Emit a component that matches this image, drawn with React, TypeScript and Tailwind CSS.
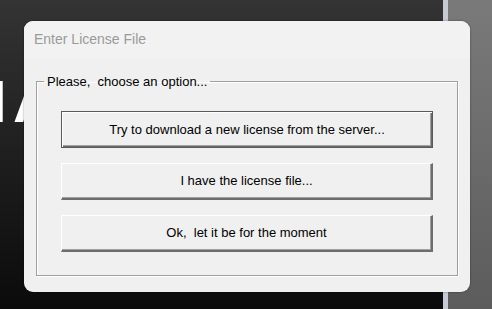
const options = [
  'Try to download a new license from the server...',
  'I have the license file...',
  'Ok,  let it be for the moment',
]

const App = () => {
  return (
    <div className="relative h-[309px] w-[492px] overflow-hidden bg-gradient-to-b from-[#343434] to-[#0b0b0b] font-['Liberation_Sans',sans-serif]">
      {/* app behind the dialog */}
      <div className="absolute left-[-10px] top-[72px] text-[60px] font-bold leading-none text-white">I</div>
      <div className="absolute left-[13px] top-[72px] text-[60px] font-bold leading-none text-white">A</div>
      <div className="absolute right-0 top-0 flex h-full w-[49px]">
        <div className="w-[5px] bg-[#c6cad2]" />
        <div className="flex-1 bg-gradient-to-b from-[#7a7a7a] to-[#5c5c5c]" />
      </div>

      <div className="absolute left-[24px] top-[21px] flex h-[271px] w-[446px] flex-col overflow-hidden rounded-[9px] bg-[#f0f0f0] shadow-[0_0_2px_rgba(0,0,0,0.5)]">
        <div className="flex h-[37px] items-center bg-[#f2f2f2] pl-[10px] text-[14px] text-[#9a9a9a]">
          Enter License File
        </div>
        <div className="px-[12px] pt-[16px]">
          <fieldset className="h-[202px] border border-[#a0a0a0] px-[24px] pb-[24px] pt-[22px] shadow-[inset_1px_1px_0_#fff,1px_1px_0_#fff]">
            <legend className="ml-[-17px] whitespace-pre px-[3px] text-[13px] leading-[15px] text-black">
              Please,  choose an option...
            </legend>
            <div className="flex flex-col gap-[15px]">
              {options.map((label, i) => (
                <button
                  key={label}
                  className={
                    i === 0
                      ? 'flex h-[37px] items-center justify-center whitespace-pre border border-[#5a5a5a] bg-[#f0f0f0] text-[13px] text-black shadow-[inset_1px_1px_0_#fff,inset_-1px_-1px_0_#696969,inset_-2px_-2px_0_#a0a0a0]'
                      : 'flex h-[37px] items-center justify-center whitespace-pre border-t border-l border-t-white border-l-white border-b-2 border-r-2 border-b-[#6d6d6d] border-r-[#6d6d6d] bg-[#f0f0f0] text-[13px] text-black shadow-[inset_-1px_-1px_0_#a0a0a0]'
                  }
                >
                  {label}
                </button>
              ))}
            </div>
          </fieldset>
        </div>
      </div>
    </div>
  )
}

export default App
